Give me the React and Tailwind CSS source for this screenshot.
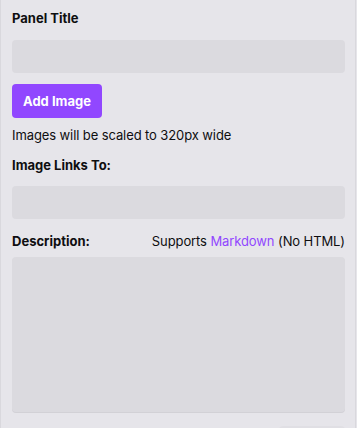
export default function App() {
  return (
    <div className="w-[357px] h-[428px] overflow-hidden bg-[#e6e5ea] font-['Inter',sans-serif] text-[13px] leading-[18px] text-[#0e0e10]">
      <div className="w-[356px] h-full border-l border-r border-[#d9d8dd] pl-[11px] pr-[10px] pt-[9px]">
        <div className="font-bold">Panel Title</div>
        <div className="mt-[13px] h-[33px] rounded-[4px] bg-[#dbdadf]" />
        <button className="mt-[11px] h-[34px] px-[11px] rounded-[4px] bg-[#9147ff] text-white font-bold text-[13px] block">
          Add Image
        </button>
        <p className="mt-[8px] tracking-[-0.1px]">Images will be scaled to 320px wide</p>
        <div className="mt-[12px] font-bold">Image Links To:</div>
        <div className="mt-[12px] h-[33px] rounded-[4px] bg-[#dbdadf]" />
        <div className="mt-[13px] flex justify-between">
          <span className="font-bold">Description:</span>
          <span className="tracking-[-0.1px]">
            Supports <span className="text-[#9147ff]">Markdown</span> (No HTML)
          </span>
        </div>
        <div className="mt-[7px] h-[155px] rounded-[4px] bg-[#dbdadf] shadow-[0_1px_0_#d2d1d6]" />
        <div className="mt-[14px] flex justify-end">
          <div className="h-[34px] w-[66px] rounded-[4px] bg-[#e0dfe4]" />
        </div>
      </div>
    </div>
  )
}
